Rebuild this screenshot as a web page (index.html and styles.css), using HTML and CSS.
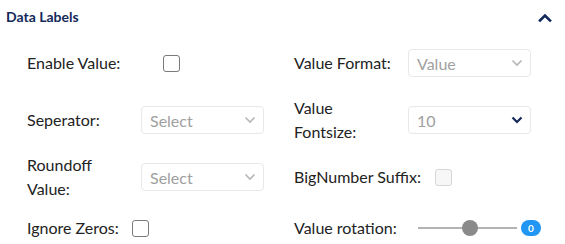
FILE: index.html
```html
<!DOCTYPE html>
<html lang="en">

<head>
    <meta charset="UTF-8">
    <title>Data Labels</title>
    <link rel="stylesheet" href="styles.css">
</head>

<body>
    <div class="panel">
        <div class="panel-header">
            <span class="panel-title">Data Labels</span>
            <svg class="collapse-icon" width="14" height="9" viewBox="0 0 14 9">
                <path d="M2 7.5 L7 2.5 L12 7.5" fill="none" stroke="#13295a" stroke-width="2.6" stroke-linecap="square"/>
            </svg>
        </div>

        <div class="fields">
            <div class="field">
                <label class="field-label">Enable Value:</label>
                <input type="checkbox" class="check check-enable">
            </div>
            <div class="field">
                <label class="field-label">Value Format:</label>
                <div class="select">
                    <span>Value</span>
                    <svg width="12" height="8" viewBox="0 0 12 8"><path d="M1.5 1.5 L6 6 L10.5 1.5" fill="none" stroke="#b5b5b5" stroke-width="1.6"/></svg>
                </div>
            </div>

            <div class="field">
                <label class="field-label">Seperator:</label>
                <div class="select">
                    <span>Select</span>
                    <svg width="12" height="8" viewBox="0 0 12 8"><path d="M1.5 1.5 L6 6 L10.5 1.5" fill="none" stroke="#b5b5b5" stroke-width="1.6"/></svg>
                </div>
            </div>
            <div class="field">
                <label class="field-label">Value Fontsize:</label>
                <div class="select">
                    <span>10</span>
                    <svg width="12" height="8" viewBox="0 0 12 8"><path d="M1.5 1.5 L6 6 L10.5 1.5" fill="none" stroke="#13295a" stroke-width="2.2"/></svg>
                </div>
            </div>

            <div class="field">
                <label class="field-label">Roundoff Value:</label>
                <div class="select">
                    <span>Select</span>
                    <svg width="12" height="8" viewBox="0 0 12 8"><path d="M1.5 1.5 L6 6 L10.5 1.5" fill="none" stroke="#b5b5b5" stroke-width="1.6"/></svg>
                </div>
            </div>
            <div class="field">
                <label class="field-label auto suffix">BigNumber Suffix:</label>
                <input type="checkbox" class="check disabled" disabled>
            </div>

            <div class="field">
                <label class="field-label auto">Ignore Zeros:</label>
                <input type="checkbox" class="check">
            </div>
            <div class="field">
                <label class="field-label nowrap">Value rotation:</label>
                <div class="range">
                    <div class="range-track">
                        <span class="range-thumb"></span>
                    </div>
                    <span class="range-value">0</span>
                </div>
            </div>
        </div>
    </div>
</body>

</html>
```

FILE: styles.css
```css
body {
    margin: 0;
    background: #ffffff;
    font-family: Lato, "Open Sans", Arial, sans-serif;
    color: #222222;
    overflow: hidden;
}

.panel {
    width: 565px;
    height: 244px;
}

/* header with the collapse arrow */
.panel-header {
    height: 33px;
    display: flex;
    align-items: center;
    justify-content: space-between;
    padding: 0 13px 0 6px;
}

.panel-title {
    font-size: 14px;
    font-weight: bold;
    color: #13295a;
}

.collapse-icon {
    display: block;
    margin-top: 1px;
}

/* two columns of settings */
.fields {
    display: grid;
    grid-template-columns: 267px 1fr;
    grid-template-rows: 44px 44px 44px 32px;
    row-gap: 13px;
    padding: 8px 0 0 27px;
}

.field {
    display: flex;
    align-items: center;
}

.field-label {
    flex: 0 0 100px;
    margin-right: 14px;
    font-size: 16px;
    line-height: 24px;
}

.field-label.auto {
    flex: 0 0 auto;
    margin-right: 13px;
}

.field-label.suffix {
    margin-right: 14px;
}

.field-label.nowrap {
    white-space: nowrap;
    min-width: 0;
}

.select {
    width: 106px;
    height: 26px;
    border: 1px solid #e8e8e8;
    border-radius: 4px;
    display: flex;
    align-items: center;
    justify-content: space-between;
    padding: 0 7px 0 8px;
    font-size: 16px;
    color: #a0a0a0;
}

.select svg {
    display: block;
}

.check {
    appearance: none;
    -webkit-appearance: none;
    width: 17px;
    height: 17px;
    margin: 0;
    border: 1.5px solid #7a7a7a;
    border-radius: 3px;
    background: #ffffff;
    box-sizing: border-box;
}

.check-enable {
    margin-left: 22px;
}

.check.disabled {
    border-color: #d6d6d6;
    background: #f7f7f7;
}

/* rotation slider */
.range {
    display: flex;
    align-items: center;
    padding-left: 10px;
}

.range-track {
    position: relative;
    width: 99px;
    height: 2px;
    background: #b3b3b3;
}

.range-thumb {
    position: absolute;
    left: 44px;
    top: -7px;
    width: 16px;
    height: 16px;
    border-radius: 50%;
    background: #8a8a8a;
}

.range-value {
    margin-left: 4px;
    width: 20px;
    height: 16px;
    border-radius: 8px;
    background: #2196f3;
    color: #ffffff;
    font-size: 10px;
    font-weight: bold;
    line-height: 16px;
    text-align: center;
}
```
